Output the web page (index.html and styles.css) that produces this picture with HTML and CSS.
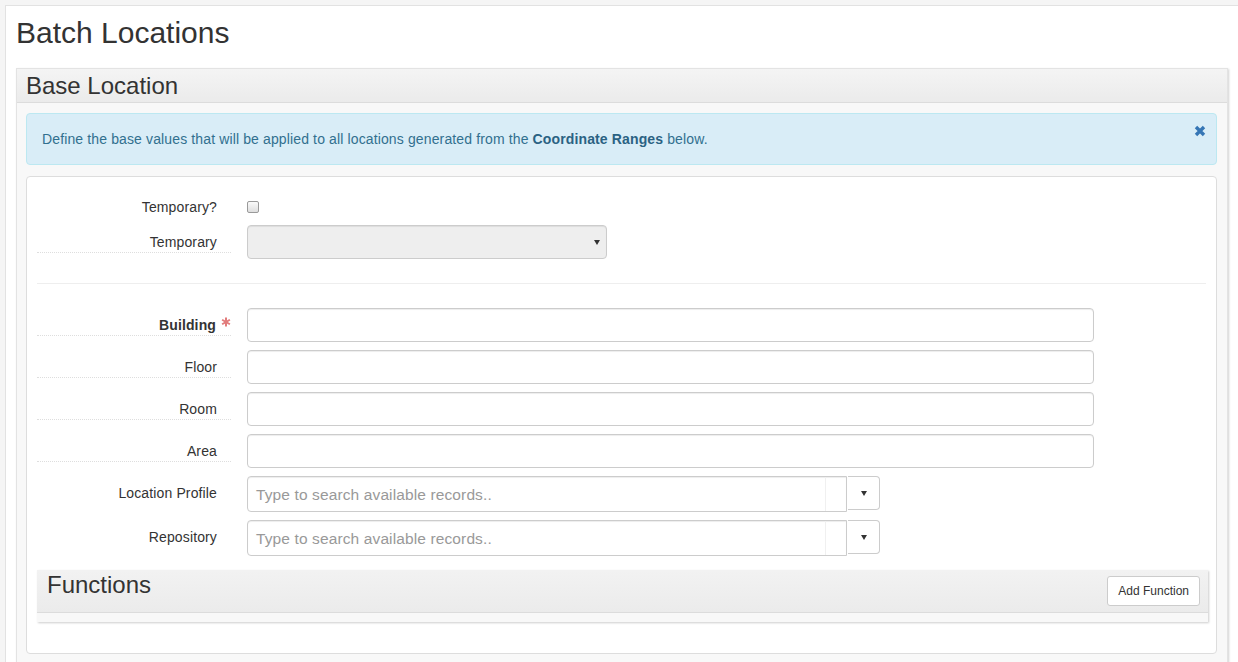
FILE: index.html
```html
<!DOCTYPE html>
<html>
<head>
<meta charset="utf-8">
<title>Batch Locations</title>
<link rel="stylesheet" href="styles.css">
</head>
<body>
<div class="page">
  <h1 class="title">Batch Locations</h1>
  <section class="panel">
    <div class="panel-head"><h2 class="panel-title">Base Location</h2></div>
    <div class="panel-body">
      <div class="alert">
        Define the base values that will be applied to all locations generated from the <strong class="alert-link">Coordinate Ranges</strong> below.
        <button class="close" type="button" aria-label="Close">
          <svg width="12" height="12" viewBox="0 0 12 12"><path d="M2 2 L10 10 M10 2 L2 10" stroke="#3576b5" stroke-width="3.4" stroke-linecap="butt" fill="none"/></svg>
        </button>
      </div>
      <div class="card">
        <div class="row row-check">
          <label class="lbl plain">Temporary?</label>
          <input class="chk" type="checkbox">
        </div>
        <div class="row">
          <label class="lbl">Temporary</label>
          <div class="select"><span class="caret"></span></div>
        </div>
        <hr class="sep">
        <div class="row">
          <label class="lbl req"><b>Building</b><svg class="ast" width="10" height="10" viewBox="0 0 10 10"><path d="M5 0.5 V9.5 M1.1 2.75 L8.9 7.25 M8.9 2.75 L1.1 7.25" stroke="#e27c7c" stroke-width="2" fill="none"/></svg></label>
          <div class="input"></div>
        </div>
        <div class="row">
          <label class="lbl">Floor</label>
          <div class="input"></div>
        </div>
        <div class="row">
          <label class="lbl">Room</label>
          <div class="input"></div>
        </div>
        <div class="row">
          <label class="lbl">Area</label>
          <div class="input"></div>
        </div>
        <div class="row row-ta">
          <label class="lbl plain">Location Profile</label>
          <div class="typeahead">
            <div class="ta-input">Type to search available records..</div>
            <div class="ta-btn"><span class="caret"></span></div>
          </div>
        </div>
        <div class="row row-ta">
          <label class="lbl plain">Repository</label>
          <div class="typeahead">
            <div class="ta-input">Type to search available records..</div>
            <div class="ta-btn"><span class="caret"></span></div>
          </div>
        </div>
        <section class="subpanel">
          <div class="sub-head">
            <h3 class="sub-title">Functions</h3>
            <button class="btn" type="button">Add Function</button>
          </div>
          <div class="sub-body"></div>
        </section>
      </div>
    </div>
  </section>
</div>
</body>
</html>
```
FILE: styles.css
```css
html, body {
  margin: 0;
  overflow: hidden;
}
body {
  background: #f5f5f5;
  padding: 5px 0 0 5px;
  font-family: "Liberation Sans", Arial, Helvetica, sans-serif;
  font-size: 14px;
  line-height: 20px;
  color: #333;
  letter-spacing: 0.13px;
}
.page {
  background: #fff;
  border-top: 1px solid #e2e2e2;
  border-left: 1px solid #e2e2e2;
  padding: 0 10px 0 10px;
  min-height: 700px;
}
.title {
  margin: 10px 0 19px 0;
  font-size: 30px;
  line-height: 33px;
  font-weight: normal;
  color: #333;
  letter-spacing: 0;
}
.panel {
  border: 1px solid #e3e3e3;
  box-shadow: 1px 1px 2px rgba(0,0,0,0.18);
  background: #f8f8f8;
}
.panel-head {
  background: linear-gradient(#f4f4f4, #ebebeb);
  border-bottom: 1px solid #dcdcdc;
  padding: 3px 9px;
  height: 27px;
}
.panel-title {
  margin: 0;
  font-size: 24px;
  line-height: 27px;
  font-weight: normal;
  letter-spacing: 0;
}
.panel-body {
  padding: 10px 10px 10px 9px;
}
.alert {
  position: relative;
  background: #d9edf7;
  border: 1px solid #bce8f1;
  border-radius: 4px;
  color: #31708f;
  padding: 15px 40px 15px 15px;
  margin-bottom: 11px;
}
.alert-link {
  color: #2a6283;
  font-weight: bold;
}
.close {
  position: absolute;
  top: 11px;
  right: 10px;
  width: 12px;
  height: 12px;
  padding: 0;
  border: 0;
  background: none;
  display: block;
}
.close svg { display: block; }
.card {
  background: #fff;
  border: 1px solid #ddd;
  border-radius: 4px;
  padding: 13px 10px 10px 10px;
}
.row {
  display: flex;
  align-items: flex-start;
  margin-bottom: 8px;
}
.row-check {
  height: 35px;
  margin-bottom: 0;
}
.lbl {
  width: 180px;
  flex: none;
  margin-right: 16px;
  padding: 7px 14px 0 0;
  text-align: right;
  line-height: 20px;
  border-bottom: 1px dotted #dedede;
}
.lbl.plain { border-bottom-color: transparent; }
.lbl.req { padding-right: 0; width: 194px; }
.lbl.req b { font-weight: bold; }
.ast {
  display: inline-block;
  margin-left: 5px;
  vertical-align: 3px;
}
.chk {
  -webkit-appearance: none;
  appearance: none;
  width: 12px;
  height: 12px;
  margin: 11px 0 0 0;
  border: 1px solid #9a9a9a;
  border-radius: 2px;
  background: linear-gradient(#fafafa, #dedede);
  box-sizing: border-box;
}
.select {
  position: relative;
  width: 360px;
  height: 34px;
  box-sizing: border-box;
  border: 1px solid #ccc;
  border-radius: 4px;
  background: #eee;
  box-shadow: inset 0 1px 1px rgba(0,0,0,0.075);
}
.select .caret {
  position: absolute;
  right: 6px;
  top: 14px;
}
.caret {
  display: block;
  width: 0;
  height: 0;
  border-left: 3.5px solid transparent;
  border-right: 3.5px solid transparent;
  border-top: 5px solid #333;
}
.sep {
  border: 0;
  border-top: 1px solid #eee;
  margin: 24px 0 24px 0;
}
.input {
  width: 847px;
  height: 34px;
  box-sizing: border-box;
  border: 1px solid #ccc;
  border-radius: 4px;
  background: #fff;
  box-shadow: inset 0 1px 1px rgba(0,0,0,0.075);
}
.typeahead {
  display: flex;
  align-items: flex-start;
}
.ta-input {
  position: relative;
  width: 600px;
  height: 36px;
  box-sizing: border-box;
  border: 1px solid #ccc;
  border-radius: 4px 0 0 4px;
  padding: 7px 8px;
  font-size: 15.5px;
  line-height: 21px;
  letter-spacing: 0.12px;
  color: #999;
  box-shadow: inset 0 1px 1px rgba(0,0,0,0.075);
}
.ta-input::after {
  content: "";
  position: absolute;
  right: 20px;
  top: 0;
  bottom: 0;
  border-left: 1px solid #f0f0f0;
}
.ta-btn {
  width: 32px;
  height: 34px;
  box-sizing: border-box;
  border: 1px solid #ccc;
  border-left: 0;
  border-radius: 0 4px 4px 0;
  background: #fff;
  display: flex;
  align-items: center;
  justify-content: center;
  margin-left: 1px;
}
.ta-btn .caret { margin-left: 1px; }
.subpanel {
  margin: 14px -2px 21px 0;
  box-shadow: 1px 1px 2px rgba(0,0,0,0.2);
  background: #f8f8f8;
}
.sub-head {
  background: linear-gradient(#f2f2f2, #ebebeb);
  border-bottom: 1px solid #dcdcdc;
  height: 41px;
  padding: 1px 8px 0 10px;
  display: flex;
  justify-content: space-between;
  align-items: flex-start;
}
.sub-title {
  margin: 0;
  font-size: 24px;
  line-height: 27px;
  font-weight: normal;
  letter-spacing: 0;
}
.btn {
  margin-top: 5px;
  height: 30px;
  padding: 5px 10px;
  font-family: "Liberation Sans", Arial, Helvetica, sans-serif;
  font-size: 12px;
  line-height: 18px;
  color: #333;
  background: #fff;
  border: 1px solid #ccc;
  border-radius: 3px;
  letter-spacing: 0;
}
.sub-body {
  height: 9px;
}
```
